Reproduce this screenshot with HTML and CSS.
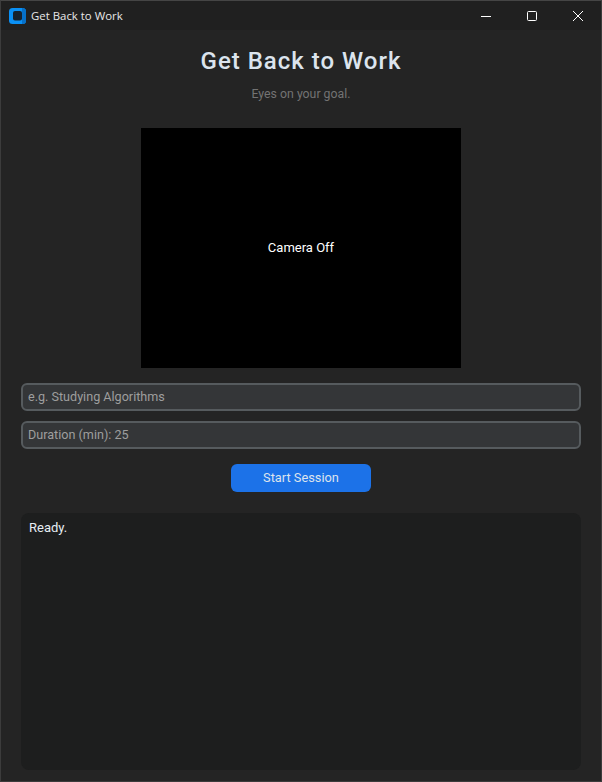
FILE: index.html
```html
<!DOCTYPE html>
<html lang="en">
<head>
<meta charset="utf-8">
<title>Get Back to Work</title>
<link rel="stylesheet" href="styles.css">
</head>
<body>
<div class="window">
  <header class="titlebar">
    <svg class="app-icon" width="17" height="16" viewBox="0 0 17 16"><rect width="17" height="16" rx="3.5" fill="#0a90f5"/><path d="M13 0h.5A3.5 3.5 0 0 1 17 3.500v9a3.500 3.500 0 0 1-3.500 3.500H13z" fill="#0670c8"/><rect x="4" y="3" width="9" height="9.500" rx="2" fill="#16222e"/></svg>
    <span class="app-name">Get Back to Work</span>
    <div class="controls">
      <span class="control"><svg width="10" height="10" viewBox="0 0 10 10"><path d="M0 5.500H10" stroke="#fff" fill="none"/></svg></span>
      <span class="control"><svg width="10" height="10" viewBox="0 0 10 10"><rect x=".5" y=".5" width="9" height="9" rx="1" stroke="#fff" fill="none"/></svg></span>
      <span class="control"><svg width="10" height="10" viewBox="0 0 10 10"><path d="M0 0L10 10M10 0L0 10" stroke="#fff" fill="none"/></svg></span>
    </div>
  </header>
  <main class="content">
    <h1 class="title">Get Back to Work</h1>
    <p class="subtitle">Eyes on your goal.</p>
    <div class="camera">Camera Off</div>
    <div class="field placeholder">e.g. Studying Algorithms</div>
    <div class="field value">Duration (min): 25</div>
    <button class="start">Start Session</button>
    <div class="log">Ready.</div>
  </main>
</div>
</body>
</html>
```
FILE: styles.css
```css
* { box-sizing: border-box; }
html, body { margin: 0; height: 100%; background: #242424; }
body { overflow: hidden; font-family: Roboto, "Liberation Sans", sans-serif; }
.window { height: 782px; display: flex; flex-direction: column; border: 1px solid #3c3c3c; border-top-color: #454545; }
.titlebar { height: 29px; flex: none; background: #202020; display: flex; align-items: center; padding-left: 8px; }
.app-icon { flex: none; }
.app-name { margin-left: 5px; color: #e8e8e8; font-size: 11.4px; font-family: "Open Sans", "Liberation Sans", sans-serif; }
.controls { margin-left: auto; display: flex; }
.control { width: 46px; height: 29px; display: flex; align-items: center; justify-content: center; }
.content { flex: 1; display: flex; flex-direction: column; align-items: center; padding: 0 20px 11px; background: #242424; }
.title { margin: 15px 0 0; height: 32px; line-height: 32px; font-size: 24px; font-weight: 500; letter-spacing: 1px; color: #dce4ee; }
.subtitle { margin: 5px 0 0; height: 24px; line-height: 24px; font-size: 12.3px; color: #737373; }
.camera { margin-top: 22px; width: 320px; height: 240px; flex: none; padding-bottom: 2px; background: #000; color: #fff; font-size: 13px; display: flex; align-items: center; justify-content: center; }
.field { width: 100%; height: 28px; flex: none; margin-top: 15px; padding: 0 5px; border: 2px solid #565b5e; border-radius: 6px; background: #343638; font-size: 12.6px; line-height: 24px; }
.field + .field { margin-top: 10px; }
.placeholder { color: #9e9e9e; }
.value { color: #9e9e9e; }
.start { margin-top: 15px; width: 140px; height: 28px; flex: none; border: 0; border-radius: 6px; background: #1c72e8; color: #dce4ee; font: 12.8px Roboto, sans-serif; padding: 0 0 2px; }
.log { margin-top: 21px; width: 100%; flex: 1; padding: 6px 8px; border-radius: 8px; background: #1d1e1e; color: #e6edf3; font-size: 13px; line-height: 17px; }
```
